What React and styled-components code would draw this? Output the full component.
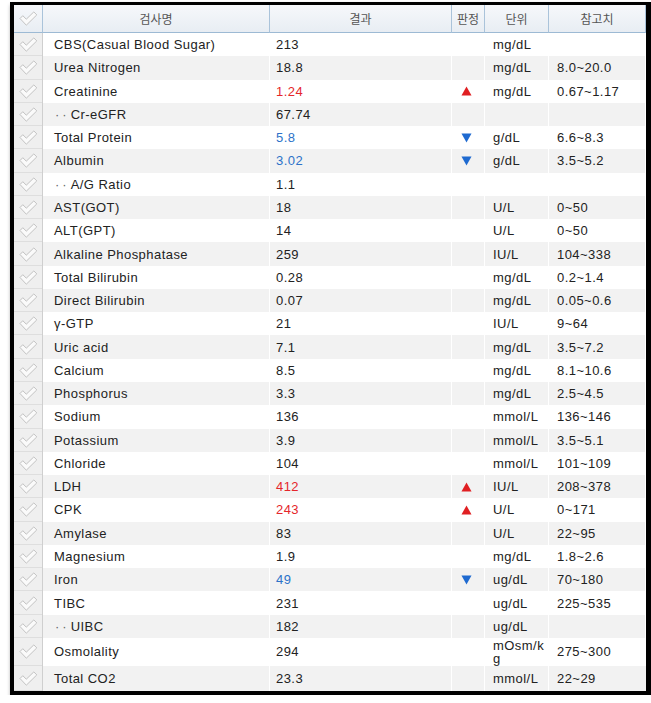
import styled, { createGlobalStyle } from "styled-components";

const GlobalStyle = createGlobalStyle`
  html, body {
    margin: 0;
    padding: 0;
    background: #ffffff;
  }
`;

const rows = [
  ["CBS(Casual Blood Sugar)", "213", null, "mg/dL", ""],
  ["Urea Nitrogen", "18.8", null, "mg/dL", "8.0~20.0"],
  ["Creatinine", "1.24", "H", "mg/dL", "0.67~1.17"],
  ["Cr-eGFR", "67.74", null, "", "", true],
  ["Total Protein", "5.8", "L", "g/dL", "6.6~8.3"],
  ["Albumin", "3.02", "L", "g/dL", "3.5~5.2"],
  ["A/G Ratio", "1.1", null, "", "", true],
  ["AST(GOT)", "18", null, "U/L", "0~50"],
  ["ALT(GPT)", "14", null, "U/L", "0~50"],
  ["Alkaline Phosphatase", "259", null, "IU/L", "104~338"],
  ["Total Bilirubin", "0.28", null, "mg/dL", "0.2~1.4"],
  ["Direct Bilirubin", "0.07", null, "mg/dL", "0.05~0.6"],
  ["γ-GTP", "21", null, "IU/L", "9~64"],
  ["Uric acid", "7.1", null, "mg/dL", "3.5~7.2"],
  ["Calcium", "8.5", null, "mg/dL", "8.1~10.6"],
  ["Phosphorus", "3.3", null, "mg/dL", "2.5~4.5"],
  ["Sodium", "136", null, "mmol/L", "136~146"],
  ["Potassium", "3.9", null, "mmol/L", "3.5~5.1"],
  ["Chloride", "104", null, "mmol/L", "101~109"],
  ["LDH", "412", "H", "IU/L", "208~378"],
  ["CPK", "243", "H", "U/L", "0~171"],
  ["Amylase", "83", null, "U/L", "22~95"],
  ["Magnesium", "1.9", null, "mg/dL", "1.8~2.6"],
  ["Iron", "49", "L", "ug/dL", "70~180"],
  ["TIBC", "231", null, "ug/dL", "225~535"],
  ["UIBC", "182", null, "ug/dL", "", true],
  ["Osmolality", "294", null, "mOsm/kg", "275~300"],
  ["Total CO2", "23.3", null, "mmol/L", "22~29"],
];

const Frame = styled.div`
  margin: 2px 0 0 10px;
  width: 632px;
  border: 4px solid #000;
  border-top-width: 3px;
  border-right-width: 5px;
  box-shadow: 1px 3px 4px rgba(0, 0, 0, 0.45);
  background: #fff;
`;

const Grid = styled.div`
  display: grid;
  grid-template-columns: 29px 227px 182px 33px 64px 1fr;
  font-family: "Liberation Sans", "Noto Sans CJK KR", sans-serif;
  font-size: 13px;
  letter-spacing: 0.45px;
  color: #222;
`;

const HeadCell = styled.div`
  height: 27px;
  display: flex;
  align-items: center;
  justify-content: center;
  background: linear-gradient(#f6f8fb, #e8edf3);
  border-bottom: 1px solid #9dbad4;
  border-right: 1px solid #aac3da;
  font-family: "Noto Sans CJK KR", sans-serif;
  font-size: 12px;
  color: #555;
  letter-spacing: 0;
  &:last-child {
    border-right: none;
  }
`;

const CheckCell = styled.div`
  height: ${(p) => p.$h}px;
  display: flex;
  align-items: center;
  justify-content: center;
  background: #efefef;
  border-right: 1px solid #cfcfcf;
  box-shadow: inset 0 -1px 0 #dedede;
`;

const Cell = styled.div`
  height: ${(p) => p.$h}px;
  display: flex;
  align-items: center;
  padding-left: ${(p) => p.$pad || 6}px;
  background: ${(p) => (p.$odd ? "#f2f2f2" : "#ffffff")};
  border-right: 1px solid #fff;
  color: ${(p) => (p.$flag === "H" ? "#e5262b" : p.$flag === "L" ? "#2d72c9" : "#222")};
  line-height: 13px;
  white-space: ${(p) => (p.$wrap ? "normal" : "nowrap")};
  overflow: hidden;
  &:last-child {
    border-right: none;
  }
`;

const FlagCell = styled(Cell)`
  justify-content: center;
  padding-left: 0;
  padding-right: 3px;
`;

const Dots = styled.span`
  padding-left: 6px;
  padding-right: 1px;
  color: #666;
  letter-spacing: 3px;
`;

const UnitText = styled.span`
  display: block;
  width: 52px;
  word-break: break-all;
`;

const Check = () => (
  <svg width="19" height="15" viewBox="0 0 19 15">
    <path
      d="M1 7.5 L3.8 4.7 L7.3 8.2 L14.8 0.9 L17.8 3.9 L7.3 14.2 Z"
      fill="#fafafa"
      stroke="#c2c2c2"
      strokeWidth="1"
      strokeLinejoin="round"
    />
  </svg>
);

const Triangle = ({ up }) => (
  <svg width="11" height="10" viewBox="0 0 11 10">
    {up ? (
      <polygon points="5.5,0.5 10.5,9.5 0.5,9.5" fill="#e01f22" />
    ) : (
      <polygon points="0.5,0.5 10.5,0.5 5.5,9.5" fill="#1f6ad0" />
    )}
  </svg>
);

const rowHeight = (i) => (i === 26 ? 28 : i === 27 ? 25 : 23.27);

export default function App() {
  return (
    <>
      <GlobalStyle />
      <Frame>
        <Grid>
          <HeadCell>
            <Check />
          </HeadCell>
          <HeadCell>검사명</HeadCell>
          <HeadCell>결과</HeadCell>
          <HeadCell>판정</HeadCell>
          <HeadCell>단위</HeadCell>
          <HeadCell>참고치</HeadCell>
          {rows.map(([name, value, flag, unit, ref, sub], i) => {
            const h = rowHeight(i);
            const odd = i % 2 === 1;
            return [
              <CheckCell key={`c${i}`} $h={h}>
                <Check />
              </CheckCell>,
              <Cell key={`n${i}`} $h={h} $odd={odd} $pad={sub ? 6 : 11}>
                {sub && <Dots>··</Dots>}
                {name}
              </Cell>,
              <Cell key={`v${i}`} $h={h} $odd={odd} $flag={flag}>
                {value}
              </Cell>,
              <FlagCell key={`f${i}`} $h={h} $odd={odd}>
                {flag && <Triangle up={flag === "H"} />}
              </FlagCell>,
              <Cell key={`u${i}`} $h={h} $odd={odd} $pad={8} $wrap>
                <UnitText>{unit}</UnitText>
              </Cell>,
              <Cell key={`r${i}`} $h={h} $odd={odd} $pad={8}>
                {ref}
              </Cell>,
            ];
          })}
        </Grid>
      </Frame>
    </>
  );
}
